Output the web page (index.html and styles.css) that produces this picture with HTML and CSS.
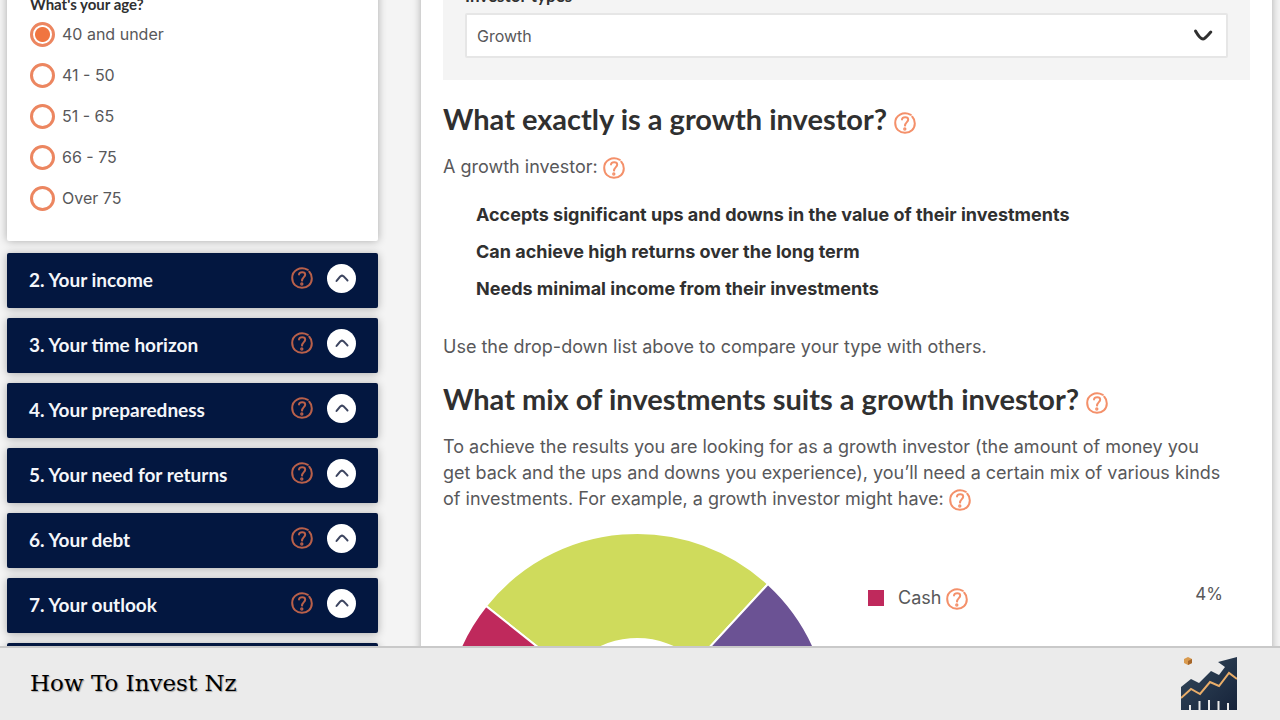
FILE: index.html
```html
<!DOCTYPE html>
<html lang="en">
  <head>
    <meta charset="utf-8" />
    <title>How To Invest Nz</title>
    <link rel="stylesheet" href="styles.css" />
  </head>
  <body>
    <!-- Shared icons -->
    <svg class="sprite" aria-hidden="true">
      <symbol id="help" viewBox="0 0 22 22">
        <path d="M16.800 2.800C9 -1 1.200 3.500 1.200 11C1.200 17 5.500 20.800 11 20.800C16.500 20.800 20.800 17 20.800 11.500C20.800 8.500 19.800 6.300 18.300 4.800" />
        <path d="M8 7.400C8.400 4.600 14 4.200 14.200 7.500C14.300 10 11.200 10.200 11 13.600" />
        <circle cx="10.800" cy="17" r=".7" />
      </symbol>
      <symbol id="chevron" viewBox="0 0 14 10">
        <path d="M1.500 8C3.500 5.500 5 3 7 2.500C9 3 10.500 5.500 12.500 7.500" />
      </symbol>
    </svg>

    <main class="page">
      <div class="sidebar">
        <form class="card age-card">
          <fieldset>
            <legend>What's your age?</legend>
            <div class="options">
              <label><input type="radio" name="age" checked />40 and under</label>
              <label><input type="radio" name="age" />41 - 50</label>
              <label><input type="radio" name="age" />51 - 65</label>
              <label><input type="radio" name="age" />66 - 75</label>
              <label><input type="radio" name="age" />Over 75</label>
            </div>
          </fieldset>
        </form>

        <section class="step">
          <h3>2. Your income</h3>
          <button class="help" aria-label="Help"><svg><use href="#help" /></svg></button>
          <button class="toggle" aria-label="Toggle"><svg><use href="#chevron" /></svg></button>
        </section>
        <section class="step">
          <h3>3. Your time horizon</h3>
          <button class="help" aria-label="Help"><svg><use href="#help" /></svg></button>
          <button class="toggle" aria-label="Toggle"><svg><use href="#chevron" /></svg></button>
        </section>
        <section class="step">
          <h3>4. Your preparedness</h3>
          <button class="help" aria-label="Help"><svg><use href="#help" /></svg></button>
          <button class="toggle" aria-label="Toggle"><svg><use href="#chevron" /></svg></button>
        </section>
        <section class="step">
          <h3>5. Your need for returns</h3>
          <button class="help" aria-label="Help"><svg><use href="#help" /></svg></button>
          <button class="toggle" aria-label="Toggle"><svg><use href="#chevron" /></svg></button>
        </section>
        <section class="step">
          <h3>6. Your debt</h3>
          <button class="help" aria-label="Help"><svg><use href="#help" /></svg></button>
          <button class="toggle" aria-label="Toggle"><svg><use href="#chevron" /></svg></button>
        </section>
        <section class="step">
          <h3>7. Your outlook</h3>
          <button class="help" aria-label="Help"><svg><use href="#help" /></svg></button>
          <button class="toggle" aria-label="Toggle"><svg><use href="#chevron" /></svg></button>
        </section>
        <section class="step"></section>
      </div>

      <article class="card result">
        <div class="type-box">
          <label for="type">Investor types</label>
          <div class="select-wrap">
            <select id="type">
              <option>Growth</option>
            </select>
            <svg class="arrow" viewBox="0 0 20 14" aria-hidden="true">
              <path d="M2.500 3C4.500 6.500 8 11 10 11C12 11 15 7 17.800 4" />
            </svg>
          </div>
        </div>

        <h2>
          What exactly is a growth investor?
          <button class="help" aria-label="Help"><svg><use href="#help" /></svg></button>
        </h2>
        <p>
          A growth investor:
          <button class="help" aria-label="Help"><svg><use href="#help" /></svg></button>
        </p>
        <ul class="traits">
          <li>Accepts significant ups and downs in the value of their investments</li>
          <li>Can achieve high returns over the long term</li>
          <li>Needs minimal income from their investments</li>
        </ul>
        <p>Use the drop-down list above to compare your type with others.</p>

        <h2>
          What mix of investments suits a growth investor?
          <button class="help" aria-label="Help"><svg><use href="#help" /></svg></button>
        </h2>
        <p>
          To achieve the results you are looking for as a growth investor (the amount of money you<br />
          get back and the ups and downs you experience), you’ll need a certain mix of various kinds<br />
          of investments. For example, a growth investor might have:
          <button class="help" aria-label="Help"><svg><use href="#help" /></svg></button>
        </p>

        <div class="mix">
          <svg class="donut" viewBox="0 0 388 388" role="img" aria-label="Investment mix">
            <path class="green" d="M43 74A193 193 0 0 1 325 52L253 130A87 87 0 0 0 126 140Z" />
            <path class="purple" d="M325 52A193 193 0 0 1 194 387L194 281A87 87 0 0 0 253 130Z" />
            <path class="pink" d="M194 387A193 193 0 0 1 43 74L126 140A87 87 0 0 0 194 281Z" />
          </svg>
          <ul class="legend">
            <li>
              <span class="swatch"></span>
              <span class="name">
                Cash
                <button class="help" aria-label="Help"><svg><use href="#help" /></svg></button>
              </span>
              <span class="value">4%</span>
            </li>
          </ul>
        </div>
      </article>
    </main>

    <footer class="footer">
      <h1>How To Invest Nz</h1>
      <svg class="logo" viewBox="0 0 56 54" role="img" aria-label="Growth chart logo">
        <defs>
          <linearGradient id="navy" x2="1" y2="1">
            <stop offset="0" stop-color="#34495c" />
            <stop offset="1" stop-color="#16233a" />
          </linearGradient>
        </defs>
        <path fill="url(#navy)" d="M0 31L10 23L18 27L30 15L38 19L44 11L37 6L56 1V54H0Z" />
        <path class="trend" d="M0 42L10 33L19 38L29 26L38 30L48 17L56 23" />
        <path class="ticks" d="M9 54V49M18.500 54V45M28 54V44M37.500 54V45M47 54V47" />
        <path fill="#d99a4e" d="M7 1L11 3V7L7 9L3 7V3Z" />
        <path fill="#a5662b" d="M7 5L11 3V7L7 9Z" />
      </svg>
    </footer>
  </body>
</html>
```
FILE: styles.css
```css
* {
  box-sizing: border-box;
}

body {
  margin: 0;
  height: 100vh;
  display: flex;
  flex-direction: column;
  overflow: hidden;
  background: #f4f4f4;
  color: #58585a;
  font-family: Inter, sans-serif;
  font-size: 18px;
}

h1,
h2,
h3,
p,
ul {
  margin: 0;
  padding: 0;
}

ul {
  list-style: none;
}

button {
  padding: 0;
  border: none;
  background: none;
  cursor: pointer;
}

.sprite {
  position: absolute;
  width: 0;
  height: 0;
}

.page {
  flex: 1;
  min-height: 0;
  overflow: hidden;
  display: grid;
  grid-template-columns: 371px 1fr;
  gap: 43px;
  padding: 0 8px 0 7px;
}

.sidebar,
.result {
  margin-top: -20px;
}

.sidebar {
  display: flex;
  flex-direction: column;
  gap: 10px;
}

.card {
  background: #fff;
  box-shadow: 0 0 8px rgba(0, 0, 0, 0.3);
}

/* Age question */
.age-card {
  padding: 12px 23px 31px;
  margin-bottom: 2px;
  border-radius: 2px;
}

fieldset {
  margin: 0;
  padding: 0;
  border: none;
}

legend {
  padding: 0;
  margin-bottom: 6px;
  color: #303030;
  font: bold 15px/24px Lato, sans-serif;
}

.options {
  display: flex;
  flex-direction: column;
  gap: 17px;
}

.options label {
  display: flex;
  align-items: center;
  gap: 7px;
  height: 24px;
  font-size: 16px;
}

.options input {
  appearance: none;
  width: 25px;
  height: 25px;
  margin: 0;
  border: 3px solid #ec8660;
  border-radius: 50%;
}

.options input:checked {
  background: radial-gradient(circle, #f07540 7px, #fff 8px);
}

/* Collapsed steps */
.step {
  display: flex;
  align-items: center;
  flex-shrink: 0;
  height: 55px;
  padding: 0 22px 5px;
  border-radius: 2px;
  background: #031740;
  box-shadow: 0 1px 8px rgba(0, 0, 0, 0.3);
}

.step h3 {
  flex: 1;
  padding-top: 3px;
  color: #f4f6fa;
  font: bold 19px/26px Lato, sans-serif;
}

.step .help {
  margin-right: 14px;
  color: #b9604a;
}

.help {
  display: inline-block;
  width: 22px;
  height: 22px;
  color: #f4906a;
  vertical-align: middle;
}

.help svg {
  display: block;
  width: 22px;
  height: 22px;
  fill: none;
  stroke: currentColor;
  stroke-width: 2;
  stroke-linecap: round;
}

.toggle {
  display: grid;
  place-items: center;
  width: 29px;
  height: 29px;
  border-radius: 50%;
  background: #fff;
}

.toggle svg {
  width: 14px;
  height: 10px;
  fill: none;
  stroke: #3d4560;
  stroke-width: 2;
  stroke-linecap: round;
}

/* Result panel */
.result {
  padding: 0 22px;
}

.type-box {
  padding: 4px 22px 22px;
  background: #f4f4f4;
}

.type-box label {
  display: block;
  margin-bottom: 5px;
  color: #303030;
  font: bold 17px/24px Lato, sans-serif;
}

.select-wrap {
  position: relative;
}

.select-wrap select {
  display: block;
  appearance: none;
  width: 100%;
  height: 45px;
  padding: 0 10px;
  border: 2px solid #e6e6e6;
  border-radius: 2px;
  background: #fff;
  color: #58585a;
  font: 16px Inter, sans-serif;
}

.arrow {
  position: absolute;
  top: 15px;
  right: 15px;
  width: 20px;
  height: 14px;
  fill: none;
  stroke: #303030;
  stroke-width: 3;
  stroke-linecap: round;
  pointer-events: none;
}

.result h2 {
  padding: 19px 0 15px;
  color: #303030;
  font: bold 29px/40px Lato, sans-serif;
}

.result p {
  line-height: 26px;
}

.traits {
  padding: 16px 0 27px 33px;
  color: #303030;
  font-weight: bold;
  line-height: 37px;
}

.mix {
  display: flex;
  gap: 37px;
  padding-top: 20px;
}

.donut {
  flex-shrink: 0;
  width: 388px;
  height: 388px;
  stroke: #fff;
  stroke-width: 2;
}

.green {
  fill: #cfdb5c;
}

.purple {
  fill: #6b5294;
}

.pink {
  fill: #bf295c;
}

.legend {
  flex: 1;
  padding: 51px 27px 0 0;
}

.legend li {
  display: flex;
  align-items: center;
}

.swatch {
  width: 16px;
  height: 16px;
  margin-right: 14px;
  background: #bf295c;
}

.name {
  flex: 1;
  line-height: 30px;
}

.value {
  padding-bottom: 8px;
  font-size: 17px;
}

/* Footer bar */
.footer {
  display: flex;
  align-items: center;
  justify-content: space-between;
  height: 74px;
  padding: 0 43px 2px 30px;
  border-top: 2px solid #c9c9c9;
  background: #ebebeb;
}

.footer h1 {
  color: #000;
  font: 23px/32px "DejaVu Serif", serif;
  text-shadow: 1px 1px 1px rgba(0, 0, 0, 0.3);
}

.logo {
  width: 56px;
  height: 54px;
}

.trend {
  fill: none;
  stroke: #e9ad69;
  stroke-width: 2;
}

.ticks {
  stroke: #ebebeb;
  stroke-width: 2;
}
```
